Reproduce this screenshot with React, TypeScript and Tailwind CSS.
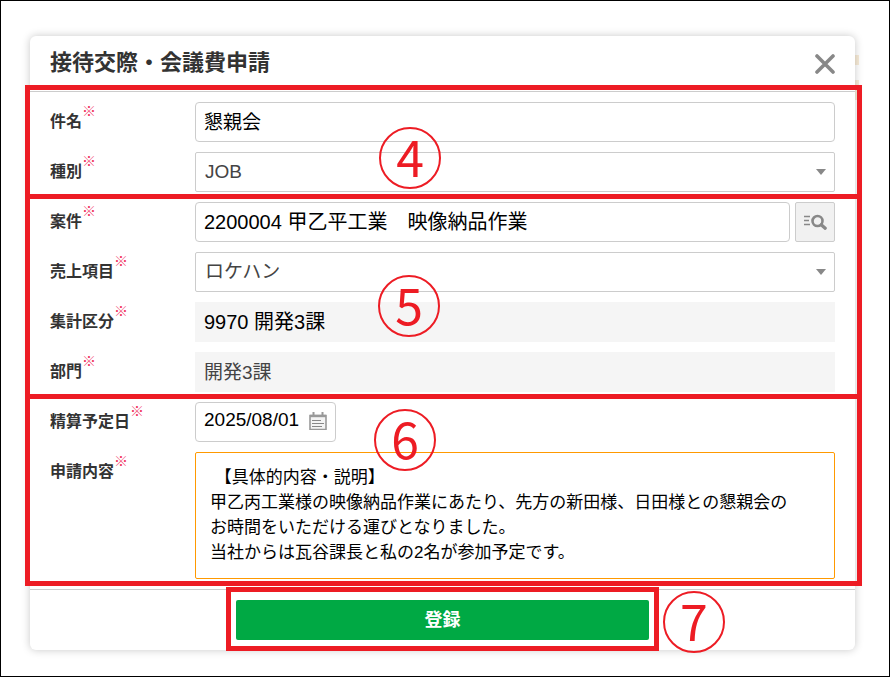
import type { ReactNode } from "react";

const inputBase =
  "block h-10 min-w-0 rounded border border-[#ccc] bg-white px-2 pb-1 text-black outline-none";

// Red numbered circle laid over the form
function StepBadge({ n, place }: { n: number; place: string }) {
  return (
    <span
      className={`pointer-events-none absolute z-20 flex size-[62px] items-center justify-center rounded-full border-2 border-[#ed1c24] pb-1.5 font-['Noto_Sans_CJK_JP',sans-serif] text-[50px] leading-none text-[#ed1c24] ${place}`}
    >
      {n}
    </span>
  );
}

// Red outline marking a step
function StepFrame({ place }: { place: string }) {
  return (
    <span
      aria-hidden="true"
      className={`pointer-events-none absolute z-10 border-5 border-[#ed1c24] ${place}`}
    />
  );
}

function Row({ id, label, children }: { id: string; label: string; children: ReactNode }) {
  return (
    <div className="flex items-start px-5">
      <label htmlFor={id} className="flex h-10 w-[145px] shrink-0 items-center text-base font-bold text-[#333]">
        {label}
        <span className="mb-[22px] text-sm leading-none font-normal text-[#f0305c]">※</span>
      </label>
      <div className="flex min-w-0 flex-1 gap-[5px]">{children}</div>
    </div>
  );
}

function Select({ id, value }: { id: string; value: string }) {
  return (
    <div className="relative flex-1">
      <select
        id={id}
        defaultValue={value}
        className="block h-10 w-full appearance-none rounded-xs border border-[#ccc] bg-white px-[9px] text-[19px] text-[#444] outline-none"
      >
        <option>{value}</option>
      </select>
      <svg viewBox="0 0 10 6" className="pointer-events-none absolute top-[17px] right-[9px] h-1.5 w-2.5" fill="#888">
        <path d="M0 0h10L5 6z" />
      </svg>
    </div>
  );
}

function CalendarIcon() {
  return (
    <svg viewBox="0 0 18 18" className="pointer-events-none absolute top-[10px] right-[9px] size-[18px]" fill="none" stroke="#999">
      <path d="M1 3.5h16v14H1z" fill="#f4f4f4" strokeWidth="1.6" />
      <path d="M1 4h16" strokeWidth="2.4" />
      <path d="M4.5 0v4M13.5 0v4" strokeWidth="2" />
      <path d="M3 8.5h9M3 11.5h12M3 14.5h10" stroke="#888" strokeWidth="1" />
    </svg>
  );
}

function SearchListIcon() {
  return (
    <svg viewBox="0 0 24 16" className="h-4 w-6" fill="none" stroke="#888">
      <path d="M1 2.5h6M1 6.5h5M1 10.5h6" strokeWidth="1.3" />
      <circle cx="14.5" cy="7" r="5" strokeWidth="2.6" />
      <path d="M18.2 10.7l4 3.6" strokeWidth="3.2" strokeLinecap="round" />
    </svg>
  );
}

const detail = ` 【具体的内容・説明】
甲乙丙工業様の映像納品作業にあたり、先方の新田様、日田様との懇親会の
お時間をいただける運びとなりました。
当社からは瓦谷課長と私の2名が参加予定です。`;

export default function App() {
  return (
    <div className="bg-white pr-1 pb-1 font-['Liberation_Sans','Noto_Sans_CJK_JP',sans-serif]">
      <main className="border border-black pt-[35px] pr-[34px] pb-[26px] pl-[29px]">
        <div className="relative">
          {/* slivers of the page behind the dialog */}
          <span className="absolute top-[19px] -right-1 h-2.5 w-1 bg-[#f8ecd8]" />
          <span className="absolute top-11 -right-1 h-5 w-1 bg-[#f8ecd8]" />
          <form className="relative rounded-md bg-white shadow-[0_0_8px_rgba(0,0,0,0.22)]">
            <header className="flex h-14 items-center justify-between border-b border-[#ccc] px-5">
              <h1 className="pb-0.5 text-[22px] font-bold text-[#333]">接待交際・会議費申請</h1>
              <button type="button" aria-label="閉じる">
                <svg viewBox="0 0 20 20" className="size-5" stroke="#888" strokeWidth="3.6" strokeLinecap="round">
                  <path d="M2 2l16 16M18 2L2 18" />
                </svg>
              </button>
            </header>

            <div className="py-[5px]">
              <section className="relative flex flex-col gap-2.5 py-[5px]">
                <StepFrame place="-top-3 -right-[7px] -bottom-0.5 -left-[5px]" />
                <StepBadge n={4} place="top-[30px] left-[349px]" />
                <Row id="subject" label="件名">
                  <input id="subject" defaultValue="懇親会" className={`${inputBase} flex-1 text-[19px]`} />
                </Row>
                <Row id="kind" label="種別">
                  <Select id="kind" value="JOB" />
                </Row>
              </section>

              <section className="relative flex flex-col gap-2.5 py-[5px]">
                <StepFrame place="-top-[3px] -right-[7px] -bottom-0.5 -left-[5px]" />
                <StepBadge n={5} place="top-[78px] left-[348px]" />
                <Row id="job" label="案件">
                  <input id="job" defaultValue="2200004 甲乙平工業　映像納品作業" className={`${inputBase} flex-1 text-xl`} />
                  <button
                    type="button"
                    aria-label="案件を検索"
                    className="flex size-10 items-center justify-center rounded-xs border border-[#ccc] bg-[#f1f1f1]"
                  >
                    <SearchListIcon />
                  </button>
                </Row>
                <Row id="item" label="売上項目">
                  <Select id="item" value="ロケハン" />
                </Row>
                <Row id="division" label="集計区分">
                  <input id="division" readOnly defaultValue="9970 開発3課" className="h-10 min-w-0 flex-1 bg-[#f5f5f5] px-[9px] pb-1 text-xl text-black outline-none" />
                </Row>
                <Row id="department" label="部門">
                  <input id="department" readOnly defaultValue="開発3課" className="h-10 min-w-0 flex-1 bg-[#f5f5f5] px-[9px] pb-1 text-[19px] text-[#444] outline-none" />
                </Row>
              </section>

              <section className="relative flex flex-col gap-2.5 py-[5px]">
                <StepFrame place="-top-[3px] -right-[7px] -bottom-0.5 -left-[5px]" />
                <StepBadge n={6} place="top-3 left-[344px]" />
                <Row id="date" label="精算予定日">
                  <div className="relative w-[141px]">
                    <input id="date" defaultValue="2025/08/01" className={`${inputBase} w-full text-[19px]`} />
                    <CalendarIcon />
                  </div>
                </Row>
                <Row id="detail" label="申請内容">
                  <textarea
                    id="detail"
                    rows={4}
                    defaultValue={detail}
                    className="block h-[127px] min-w-0 flex-1 resize-none overflow-hidden rounded-xs border border-[#f90] bg-white px-3.5 py-3 text-[17px] leading-[25px] text-black outline-none"
                  />
                </Row>
              </section>
            </div>

            <footer className="flex justify-center border-t border-[#ccc] py-2.5">
              <div className="relative w-1/2">
                <StepFrame place="-top-[13px] -right-2.5 -bottom-[11px] -left-2.5" />
                <StepBadge n={7} place="-top-[9px] left-full ml-3.5" />
                <button type="submit" className="block h-10 w-full rounded-xs bg-[#00a944] text-lg font-bold text-white">
                  登録
                </button>
              </div>
            </footer>
          </form>
        </div>
      </main>
    </div>
  );
}
